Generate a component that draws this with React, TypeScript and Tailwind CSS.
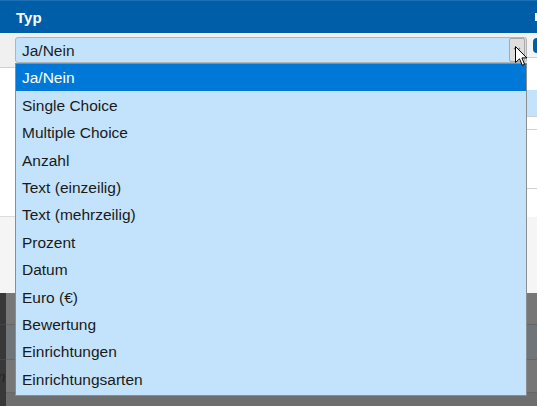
import React from "react";

const items = [
  "Ja/Nein",
  "Single Choice",
  "Multiple Choice",
  "Anzahl",
  "Text (einzeilig)",
  "Text (mehrzeilig)",
  "Prozent",
  "Datum",
  "Euro (€)",
  "Bewertung",
  "Einrichtungen",
  "Einrichtungsarten",
];

export default function App() {
  return (
    <div
      className="relative w-[537px] h-[406px] overflow-hidden bg-white"
      style={{ fontFamily: '"Liberation Sans", Arial, sans-serif' }}
    >
      {/* Header */}
      <div className="h-[33px] bg-[#005ea8] border-t border-[#1d6fb3] flex items-center justify-between pl-4">
        <span className="text-white font-bold text-[15px] leading-none">Typ</span>
        <span className="w-[2px] h-[8px] bg-white mr-0" />
      </div>

      {/* Table area */}
      <div className="flex">
        <div className="flex-1 flex flex-col">
          <div className="h-[35px] bg-[#f0f0f0] border-b border-[#cfcfcf]" />
          <div className="h-[149px] bg-white border-b border-[#dcdcdc]" />
          <div className="h-[76px] bg-[#f5f5f5]" />
        </div>
        <div className="w-[10px] flex flex-col">
          <div className="h-[25px] bg-[#f3f3f3] border-b border-[#cfcfcf] flex items-center pl-[6px]">
            <div className="w-[12px] h-[15px] shrink-0 rounded-[4px] bg-[#005ea8]" />
          </div>
          <div className="h-[32px] bg-white" />
          <div className="h-[27px] bg-[#c3e3fc] border-b border-[#d0d0d0]" />
          <div className="h-[13px] bg-white border-b border-[#d0d0d0]" />
          <div className="h-[59px] bg-white border-b border-[#d0d0d0]" />
          <div className="h-[28px] bg-white" />
          <div className="h-[76px] bg-[#f5f5f5]" />
        </div>
      </div>

      {/* Dim area */}
      <div className="flex h-[113px]">
        <div className="w-[6px] bg-[#383838] flex flex-col">
          <div className="h-[31px]" />
          <div className="h-[35px] border-t border-[#444]" />
          <div className="h-[33px] border-t border-[#444] overflow-hidden flex items-center">
            <span className="italic text-[15px] text-[#222] leading-none -ml-[7px]">m</span>
          </div>
        </div>
        <div className="flex-1 flex flex-col">
          <div className="h-[31px] bg-[#777777]" />
          <div className="h-[35px] bg-[#70757a] border-t border-[#666]" />
          <div className="h-[33px] bg-[#777777] border-t border-[#666]" />
          <div className="flex-1 bg-[#6e6e6e] border-t border-[#666]" />
        </div>
      </div>

      {/* Select box */}
      <div className="absolute left-[15px] top-[37px] w-[512px] h-[26px] bg-[#c3e3fc] border border-[#b4b4b4] rounded-[3px] flex items-center pl-[6px] pt-[1px]">
        <span className="text-[15.5px] text-[#1e1e1e] leading-none">Ja/Nein</span>
        <div className="absolute right-[1px] top-0 w-[16px] h-[24px] bg-[#dedede] border border-[#a8a8a8] rounded-[2px] flex items-center justify-center">
          <svg width="8" height="6" viewBox="0 0 8 6">
            <path d="M1 1 L4 4 L7 1" fill="none" stroke="#777" strokeWidth="1.2" />
          </svg>
        </div>
      </div>

      {/* Dropdown list */}
      <div className="absolute left-[15px] top-[63px] w-[512px] h-[333px] bg-[#c3e3fc] border border-[#8d8d8d] flex flex-col">
        {items.map((t, i) => (
          <div
            key={t}
            className={
              i === 0
                ? "h-[27.4px] shrink-0 bg-[#0078d7] text-white flex items-center pl-[6px] pt-[1px] text-[15.5px] leading-none"
                : "h-[27.4px] shrink-0 text-[#1a1a1a] flex items-center pl-[6px] pt-[1px] text-[15.5px] leading-none"
            }
          >
            {t}
          </div>
        ))}
      </div>

      {/* Mouse cursor */}
      <svg className="absolute left-[515px] top-[46px]" width="13" height="21" viewBox="0 0 13 21">
        <path
          d="M0.5 0.5 L0.5 16.5 L4.5 12.8 L7.3 19.3 L9.6 18.3 L6.9 11.9 L11.8 11.9 Z"
          fill="#fff"
          stroke="#000"
          strokeWidth="1"
          strokeLinejoin="miter"
        />
      </svg>
    </div>
  );
}
